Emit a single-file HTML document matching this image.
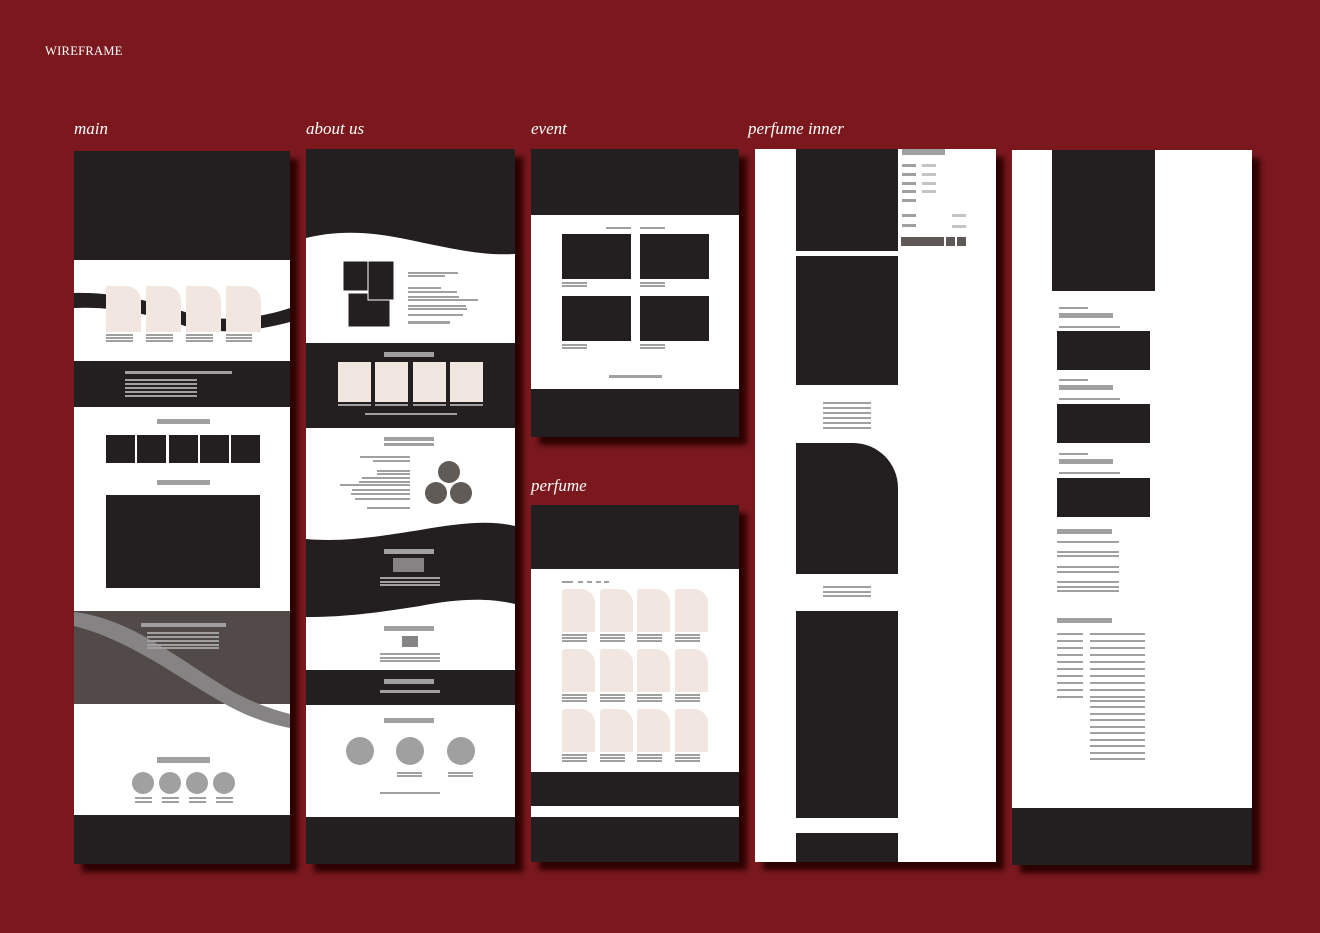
<!DOCTYPE html>
<html><head><meta charset="utf-8"><style>
html,body{margin:0;padding:0;background:#7a181e;}
svg{display:block}
</style></head><body>
<svg width="1320" height="933" viewBox="0 0 1320 933" xmlns="http://www.w3.org/2000/svg">
<defs>
<filter id="sh" x="-20%" y="-20%" width="140%" height="140%"><feGaussianBlur stdDeviation="3"/></filter>
</defs>
<rect width="1320" height="933" fill="#7a181e"/>
<g font-family="Liberation Serif, serif" fill="#fff">
<text x="45" y="55" font-size="12.5" letter-spacing="0.3">WIREFRAME</text>
<g font-style="italic" font-size="17">
<text x="74" y="134">main</text>
<text x="306" y="134">about us</text>
<text x="531" y="134">event</text>
<text x="531" y="491">perfume</text>
<text x="748" y="134">perfume inner</text>
</g></g>
<!-- shadows -->
<g fill="#2a0306" filter="url(#sh)">
<rect x="82" y="159" width="216" height="713"/>
<rect x="314" y="157" width="209" height="715"/>
<rect x="539" y="157" width="208" height="288"/>
<rect x="539" y="513" width="208" height="357"/>
<rect x="763" y="157" width="241" height="713"/>
<rect x="1020" y="158" width="240" height="715"/>
</g>

<!-- MAIN -->
<g>
<rect x="74" y="151" width="216" height="713" fill="#fff"/>
<rect x="74" y="151" width="216" height="109" fill="#231f20"/>
<path d="M74 293 C110 292 150 300 185 312 C220 324 260 318 290 308 L290 322 C260 330 220 336 185 326 C150 314 110 306 74 308Z" fill="#231f20"/>
<g fill="#f2e6e0">
<path d="M106 286 h20 a15 15 0 0 1 15 15 v31 h-35z"/>
<path d="M146 286 h20 a15 15 0 0 1 15 15 v31 h-35z"/>
<path d="M186 286 h20 a15 15 0 0 1 15 15 v31 h-35z"/>
<path d="M226 286 h20 a15 15 0 0 1 15 15 v31 h-35z"/>
</g>
<g fill="#a0a0a0">
<rect x="106" y="334" width="27" height="2"/><rect x="106" y="337" width="27" height="2"/><rect x="106" y="340" width="27" height="2"/>
<rect x="146" y="334" width="27" height="2"/><rect x="146" y="337" width="27" height="2"/><rect x="146" y="340" width="27" height="2"/>
<rect x="186" y="334" width="27" height="2"/><rect x="186" y="337" width="27" height="2"/><rect x="186" y="340" width="27" height="2"/>
<rect x="226" y="334" width="26" height="2"/><rect x="226" y="337" width="26" height="2"/><rect x="226" y="340" width="26" height="2"/>
</g>
<rect x="74" y="361" width="216" height="46" fill="#231f20"/>
<g fill="#a0a0a0">
<rect x="125" y="371" width="107" height="3"/>
<rect x="125" y="379" width="72" height="2"/><rect x="125" y="383" width="72" height="2"/><rect x="125" y="387" width="72" height="2"/><rect x="125" y="391" width="72" height="2"/><rect x="125" y="395" width="72" height="2"/>
<rect x="157" y="419" width="53" height="5"/>
<rect x="157" y="480" width="53" height="5"/>
</g>
<g fill="#231f20">
<rect x="106" y="435" width="29" height="28"/><rect x="137" y="435" width="29" height="28"/><rect x="169" y="435" width="29" height="28"/><rect x="200" y="435" width="29" height="28"/><rect x="231" y="435" width="29" height="28"/>
<rect x="106" y="495" width="154" height="93"/>
</g>
<rect x="74" y="611" width="216" height="93" fill="#524a48"/>
<path d="M74 612 C130 618 180 660 230 690 C255 704 275 710 290 714 L290 728 C270 724 250 718 225 704 C175 676 130 640 74 626Z" fill="#858383"/>
<g fill="#a0a0a0">
<rect x="141" y="623" width="85" height="4"/>
<rect x="147" y="632" width="72" height="2"/><rect x="147" y="636" width="72" height="2"/><rect x="147" y="640" width="72" height="2"/><rect x="147" y="644" width="72" height="2"/><rect x="147" y="647" width="72" height="2"/>
<rect x="157" y="757" width="53" height="6"/>
<circle cx="143" cy="783" r="11"/><circle cx="170" cy="783" r="11"/><circle cx="197" cy="783" r="11"/><circle cx="224" cy="783" r="11"/>
<rect x="135" y="797" width="17" height="2"/><rect x="135" y="801" width="17" height="2"/>
<rect x="162" y="797" width="17" height="2"/><rect x="162" y="801" width="17" height="2"/>
<rect x="189" y="797" width="17" height="2"/><rect x="189" y="801" width="17" height="2"/>
<rect x="216" y="797" width="17" height="2"/><rect x="216" y="801" width="17" height="2"/>
</g>
<rect x="74" y="815" width="216" height="49" fill="#231f20"/>
</g>

<!-- ABOUT US -->
<g>
<rect x="306" y="149" width="209" height="715" fill="#fff"/>
<path d="M306 149 H515 V254 C480 256 450 248 400 238 C360 230 330 232 306 238Z" fill="#231f20"/>
<g fill="#231f20" stroke="#fff" stroke-width="1">
<rect x="343" y="261" width="25" height="30"/>
<rect x="348" y="293" width="42" height="34"/>
<rect x="368" y="261" width="26" height="39"/>
</g>
<g fill="#a0a0a0">
<rect x="408" y="272" width="50" height="2"/><rect x="408" y="275" width="37" height="2"/>
<rect x="408" y="287" width="33" height="2"/><rect x="408" y="291" width="49" height="2"/><rect x="408" y="296" width="51" height="2"/><rect x="408" y="299" width="70" height="2"/><rect x="408" y="305" width="58" height="2"/><rect x="408" y="308" width="59" height="2"/><rect x="408" y="314" width="55" height="2"/><rect x="408" y="321" width="42" height="3"/>
</g>
<rect x="306" y="343" width="209" height="85" fill="#231f20"/>
<g fill="#a0a0a0"><rect x="384" y="352" width="50" height="5"/>
<rect x="338" y="404" width="33" height="2"/><rect x="375" y="404" width="33" height="2"/><rect x="413" y="404" width="33" height="2"/><rect x="450" y="404" width="33" height="2"/>
<rect x="365" y="413" width="92" height="2"/></g>
<g fill="#f2e6e0"><rect x="338" y="362" width="33" height="40"/><rect x="375" y="362" width="33" height="40"/><rect x="413" y="362" width="33" height="40"/><rect x="450" y="362" width="33" height="40"/></g>
<g fill="#a0a0a0">
<rect x="384" y="437" width="50" height="4"/><rect x="384" y="443" width="50" height="3"/>
<rect x="360" y="456" width="50" height="2"/><rect x="373" y="460" width="37" height="2"/>
<rect x="377" y="470" width="33" height="2"/><rect x="377" y="473" width="33" height="2"/><rect x="362" y="477" width="48" height="2"/><rect x="359" y="481" width="51" height="2"/><rect x="340" y="484" width="70" height="2"/><rect x="352" y="489" width="58" height="2"/><rect x="351" y="493" width="59" height="2"/><rect x="355" y="498" width="55" height="2"/><rect x="367" y="507" width="43" height="2"/>
</g>
<g fill="#615b58"><circle cx="449" cy="472" r="11"/><circle cx="436" cy="493" r="11"/><circle cx="461" cy="493" r="11"/></g>
<path d="M306 539 C340 542 370 538 420 530 C460 523 490 520 515 526 V604 C490 598 460 598 420 606 C370 614 340 617 306 617Z" fill="#231f20"/>
<g fill="#a0a0a0">
<rect x="384" y="549" width="50" height="5"/><rect x="393" y="558" width="31" height="14" fill="#858383"/>
<rect x="380" y="577" width="60" height="2"/><rect x="380" y="581" width="60" height="2"/><rect x="380" y="584" width="60" height="2"/>
<rect x="384" y="626" width="50" height="5"/><rect x="402" y="636" width="16" height="11" fill="#858383"/>
<rect x="380" y="653" width="60" height="2"/><rect x="380" y="657" width="60" height="2"/><rect x="380" y="660" width="60" height="2"/>
</g>
<rect x="306" y="670" width="209" height="35" fill="#231f20"/>
<g fill="#a0a0a0">
<rect x="384" y="679" width="50" height="5"/><rect x="380" y="690" width="60" height="3"/>
<rect x="384" y="718" width="50" height="5"/>
<circle cx="360" cy="751" r="14"/><circle cx="410" cy="751" r="14"/><circle cx="461" cy="751" r="14"/>
<rect x="397" y="772" width="25" height="2"/><rect x="397" y="775" width="25" height="2"/>
<rect x="448" y="772" width="25" height="2"/><rect x="448" y="775" width="25" height="2"/>
<rect x="380" y="792" width="60" height="2"/>
</g>
<rect x="306" y="817" width="209" height="47" fill="#231f20"/>
</g>

<!-- EVENT -->
<g>
<rect x="531" y="149" width="208" height="288" fill="#fff"/>
<rect x="531" y="149" width="208" height="66" fill="#231f20"/>
<g fill="#231f20"><rect x="562" y="234" width="69" height="45"/><rect x="640" y="234" width="69" height="45"/><rect x="562" y="296" width="69" height="45"/><rect x="640" y="296" width="69" height="45"/></g>
<g fill="#a0a0a0">
<rect x="606" y="227" width="25" height="2"/><rect x="640" y="227" width="25" height="2"/>
<rect x="562" y="282" width="25" height="2"/><rect x="562" y="285" width="25" height="2"/><rect x="640" y="282" width="25" height="2"/><rect x="640" y="285" width="25" height="2"/>
<rect x="562" y="344" width="25" height="2"/><rect x="562" y="347" width="25" height="2"/><rect x="640" y="344" width="25" height="2"/><rect x="640" y="347" width="25" height="2"/>
<rect x="609" y="375" width="53" height="3"/>
</g>
<rect x="531" y="389" width="208" height="48" fill="#231f20"/>
</g>

<!-- PERFUME -->
<g>
<rect x="531" y="505" width="208" height="357" fill="#fff"/>
<rect x="531" y="505" width="208" height="64" fill="#231f20"/>
<g fill="#a0a0a0"><rect x="562" y="581" width="11" height="2"/><rect x="578" y="581" width="5" height="2"/><rect x="587" y="581" width="5" height="2"/><rect x="596" y="581" width="5" height="2"/><rect x="604" y="581" width="5" height="2"/></g>
<g fill="#f2e6e0">
<path id="c" d="M562 592 a3 3 0 0 1 3 -3 h16 a14 14 0 0 1 14 14 v29 h-33z"/>
<use href="#c" x="38"/><use href="#c" x="75"/><use href="#c" x="113"/>
<use href="#c" y="60"/><use href="#c" x="38" y="60"/><use href="#c" x="75" y="60"/><use href="#c" x="113" y="60"/>
<use href="#c" y="120"/><use href="#c" x="38" y="120"/><use href="#c" x="75" y="120"/><use href="#c" x="113" y="120"/>
</g>
<g fill="#a0a0a0">
<g id="l"><rect x="562" y="634" width="25" height="2"/><rect x="562" y="637" width="25" height="2"/><rect x="562" y="640" width="25" height="2"/></g>
<use href="#l" x="38"/><use href="#l" x="75"/><use href="#l" x="113"/>
<use href="#l" y="60"/><use href="#l" x="38" y="60"/><use href="#l" x="75" y="60"/><use href="#l" x="113" y="60"/>
<use href="#l" y="120"/><use href="#l" x="38" y="120"/><use href="#l" x="75" y="120"/><use href="#l" x="113" y="120"/>
</g>
<rect x="531" y="772" width="208" height="34" fill="#231f20"/>
<rect x="531" y="817" width="208" height="45" fill="#231f20"/>
</g>

<!-- PERFUME INNER -->
<g>
<rect x="755" y="149" width="241" height="713" fill="#fff"/>
<g fill="#231f20">
<rect x="796" y="149" width="102" height="102"/>
<rect x="796" y="256" width="102" height="129"/>
<path d="M796 443 H853 A45 45 0 0 1 898 488 V574 H796Z"/>
<rect x="796" y="611" width="102" height="207"/>
<rect x="796" y="833" width="102" height="29"/>
</g>
<g fill="#a0a0a0">
<rect x="823" y="402" width="48" height="2"/><rect x="823" y="407" width="48" height="2"/><rect x="823" y="412" width="48" height="2"/><rect x="823" y="417" width="48" height="2"/><rect x="823" y="422" width="48" height="2"/><rect x="823" y="427" width="48" height="2"/>
<rect x="823" y="586" width="48" height="2"/><rect x="823" y="591" width="48" height="2"/><rect x="823" y="595" width="48" height="2"/>
<rect x="902" y="149" width="43" height="6"/>
<rect x="902" y="164" width="14" height="3"/><rect x="902" y="173" width="14" height="3"/><rect x="902" y="182" width="14" height="3"/><rect x="902" y="190" width="14" height="3"/><rect x="902" y="199" width="14" height="3"/>
<rect x="902" y="214" width="14" height="3"/><rect x="902" y="224" width="14" height="3"/>
</g>
<g fill="#c4c4c4"><rect x="922" y="164" width="14" height="3"/><rect x="922" y="173" width="14" height="3"/><rect x="922" y="182" width="14" height="3"/><rect x="922" y="190" width="14" height="3"/>
<rect x="952" y="214" width="14" height="3"/><rect x="952" y="225" width="14" height="3"/></g>
<g fill="#5e5856"><rect x="901" y="237" width="43" height="9"/><rect x="946" y="237" width="9" height="9"/><rect x="957" y="237" width="9" height="9"/></g>
</g>

<!-- FIFTH -->
<g>
<rect x="1012" y="150" width="240" height="715" fill="#fff"/>
<g fill="#231f20">
<rect x="1052" y="150" width="103" height="141"/>
<rect x="1057" y="331" width="93" height="39"/>
<rect x="1057" y="404" width="93" height="39"/>
<rect x="1057" y="478" width="93" height="39"/>
</g>
<g fill="#a0a0a0">
<rect x="1059" y="307" width="29" height="2"/><rect x="1059" y="313" width="54" height="5"/><rect x="1059" y="326" width="61" height="2"/>
<rect x="1059" y="379" width="29" height="2"/><rect x="1059" y="385" width="54" height="5"/><rect x="1059" y="398" width="61" height="2"/>
<rect x="1059" y="453" width="29" height="2"/><rect x="1059" y="459" width="54" height="5"/><rect x="1059" y="472" width="61" height="2"/>
<rect x="1057" y="529" width="55" height="5"/>
<rect x="1057" y="541" width="62" height="2"/><rect x="1057" y="551" width="62" height="2"/><rect x="1057" y="555" width="62" height="2"/><rect x="1057" y="566" width="62" height="2"/><rect x="1057" y="571" width="62" height="2"/><rect x="1057" y="581" width="62" height="2"/><rect x="1057" y="586" width="62" height="2"/><rect x="1057" y="590" width="62" height="2"/>
<rect x="1057" y="618" width="55" height="5"/>
<rect x="1057" y="633" width="26" height="2"/><rect x="1057" y="640" width="26" height="2"/><rect x="1057" y="647" width="26" height="2"/><rect x="1057" y="654" width="26" height="2"/><rect x="1057" y="661" width="26" height="2"/><rect x="1057" y="668" width="26" height="2"/><rect x="1057" y="675" width="26" height="2"/><rect x="1057" y="682" width="26" height="2"/><rect x="1057" y="689" width="26" height="2"/><rect x="1057" y="696" width="26" height="2"/>
<rect x="1090" y="633" width="55" height="2"/><rect x="1090" y="640" width="55" height="2"/><rect x="1090" y="647" width="55" height="2"/><rect x="1090" y="654" width="55" height="2"/><rect x="1090" y="661" width="55" height="2"/><rect x="1090" y="668" width="55" height="2"/><rect x="1090" y="675" width="55" height="2"/><rect x="1090" y="682" width="55" height="2"/><rect x="1090" y="689" width="55" height="2"/><rect x="1090" y="696" width="55" height="2"/><rect x="1090" y="700" width="55" height="2"/><rect x="1090" y="706" width="55" height="2"/><rect x="1090" y="713" width="55" height="2"/><rect x="1090" y="719" width="55" height="2"/><rect x="1090" y="726" width="55" height="2"/><rect x="1090" y="732" width="55" height="2"/><rect x="1090" y="739" width="55" height="2"/><rect x="1090" y="745" width="55" height="2"/><rect x="1090" y="752" width="55" height="2"/><rect x="1090" y="758" width="55" height="2"/>
</g>
<rect x="1012" y="808" width="240" height="57" fill="#231f20"/>
</g>
</svg>
</body></html>
